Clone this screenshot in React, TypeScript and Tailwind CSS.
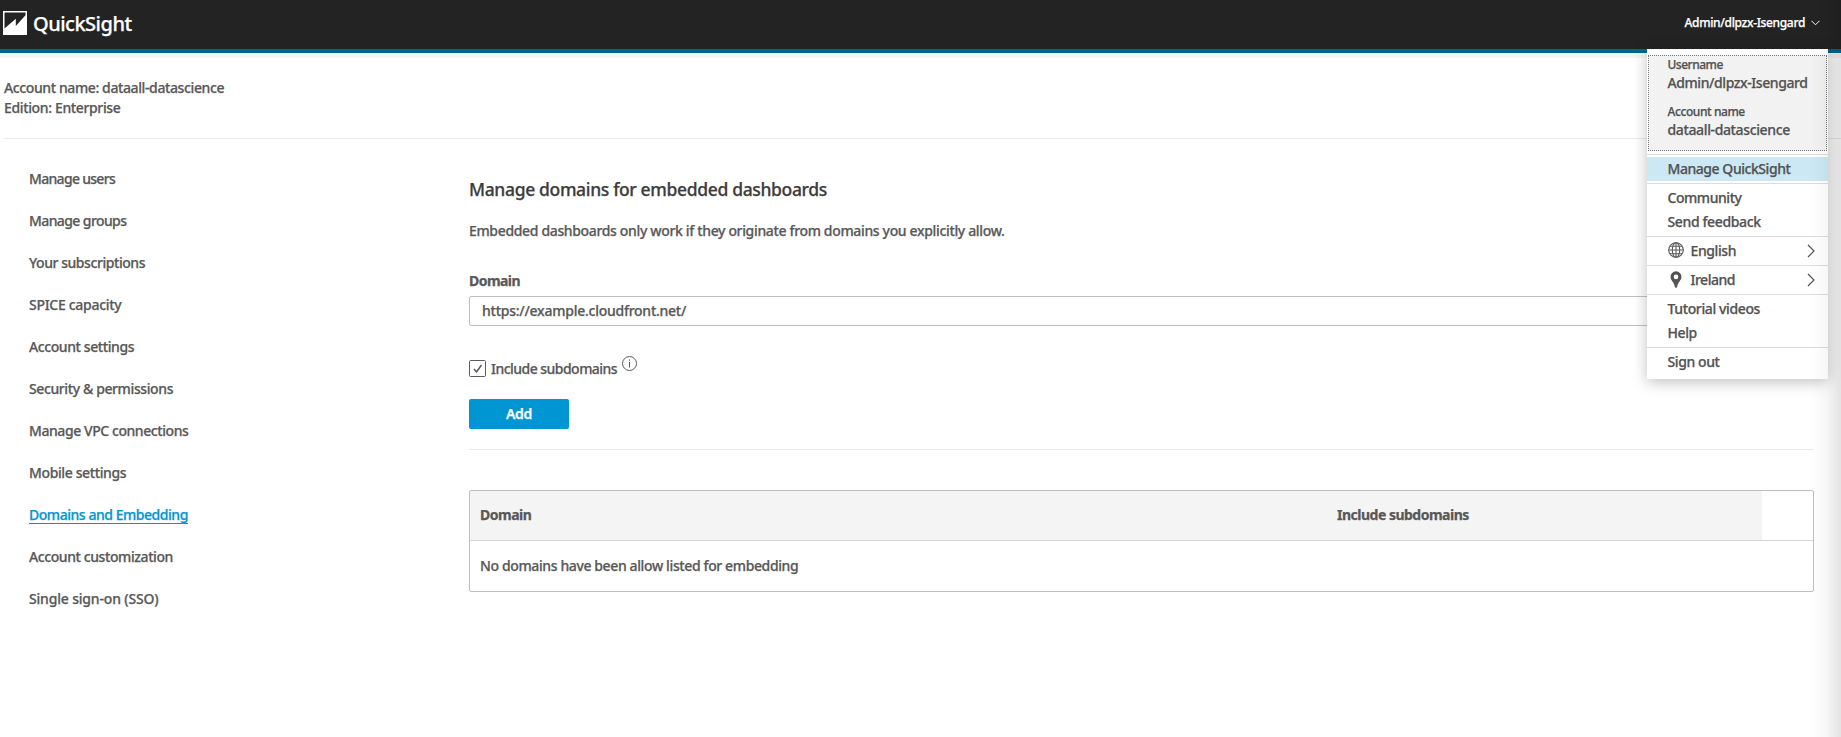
import type { ReactNode } from "react";

const NAV: { label: string; cls: string; active?: boolean }[] = [
  { label: "Manage users", cls: "tracking-[-0.69px]" },
  { label: "Manage groups", cls: "tracking-[-0.6px]" },
  { label: "Your subscriptions", cls: "tracking-[-0.44px]" },
  { label: "SPICE capacity", cls: "tracking-[-0.29px]" },
  { label: "Account settings", cls: "tracking-[-0.41px]" },
  { label: "Security & permissions", cls: "tracking-[-0.39px]" },
  { label: "Manage VPC connections", cls: "tracking-[-0.43px]" },
  { label: "Mobile settings", cls: "tracking-[-0.38px]" },
  { label: "Domains and Embedding", cls: "tracking-[-0.46px]", active: true },
  { label: "Account customization", cls: "tracking-[-0.41px]" },
  { label: "Single sign-on (SSO)", cls: "tracking-[-0.18px]" },
];

function Logo() {
  return (
    <svg width="24" height="24" viewBox="0 0 24 24" className="shrink-0">
      <rect width="24" height="24" fill="#fff" />
      <path d="M1.500 1.500h21v2.700L12.800 15V7.800L1.500 17.500z" fill="#232323" />
    </svg>
  );
}

function Globe() {
  return (
    <svg width="16" height="16" viewBox="0 0 16 16" fill="none" stroke="#5a5a5a" strokeWidth="1.1">
      <circle cx="8" cy="8" r="7.300" />
      <ellipse cx="8" cy="8" rx="3.700" ry="7.300" />
      <path d="M8 .7v14.600M.7 8h14.600M1.900 4.300h12.200M1.900 11.700h12.200" />
    </svg>
  );
}

function Pin() {
  return (
    <svg width="12" height="17" viewBox="0 0 12 17">
      <path
        fillRule="evenodd"
        d="M6 .3A5.500 5.500 0 0 0 .5 5.800C.5 9.500 4.200 11.300 4.800 15.700Q5 16.800 6 16.800T7.200 15.700C7.800 11.300 11.500 9.500 11.500 5.800A5.500 5.500 0 0 0 6 .3zM6 3.600a2.300 2.300 0 1 1 0 4.600 2.300 2.300 0 0 1 0-4.600z"
        fill="#545454"
      />
    </svg>
  );
}

function Group({ children, last }: { children: ReactNode; last?: boolean }) {
  return <div className={last ? "pt-[2px] pb-[5px]" : "border-b border-[#dcdcdc] py-[2px]"}>{children}</div>;
}

function Item({ label, cls, icon, active }: { label: string; cls: string; icon?: ReactNode; active?: boolean }) {
  return (
    <div className={`flex h-6 items-center pr-[13px] pl-[20.5px] leading-6 ${active ? "bg-[#cbe8f4]" : ""}`}>
      {icon && <span className="flex w-[23px] shrink-0 items-center pb-[2px]">{icon}</span>}
      <span className={cls}>{label}</span>
      {icon && (
        <svg width="8" height="14" viewBox="0 0 8 14" fill="none" stroke="#545454" strokeWidth="1.2" className="ml-auto">
          <path d="M1 1l6 6-6 6" />
        </svg>
      )}
    </div>
  );
}

function Menu() {
  return (
    <div className="absolute top-[49px] right-[13px] z-10 w-[181px] bg-white pt-[6px] text-[#525252] shadow-[0_3px_14px_rgba(0,0,0,0.25)]">
      <div className="mx-px h-24 border border-dotted border-[#777] bg-[#f2f2f2] pl-[18.5px]">
        <p className="mt-px text-xs leading-4 tracking-[-0.5px]">Username</p>
        <p className="leading-5 tracking-[-0.42px]">Admin/dlpzx-Isengard</p>
        <p className="mt-[11px] text-xs leading-4 tracking-[-0.42px]">Account name</p>
        <p className="leading-5 tracking-[-0.37px]">dataall-datascience</p>
      </div>
      <div className="mt-[3px] border-t border-[#dcdcdc]" />
      <Group>
        <Item label="Manage QuickSight" cls="tracking-[-0.45px]" active />
      </Group>
      <Group>
        <Item label="Community" cls="tracking-[-0.45px]" />
        <Item label="Send feedback" cls="tracking-[-0.37px]" />
      </Group>
      <Group>
        <Item label="English" cls="tracking-[-0.4px]" icon={<Globe />} />
      </Group>
      <Group>
        <Item label="Ireland" cls="tracking-[-0.5px]" icon={<span className="ml-0.5"><Pin /></span>} />
      </Group>
      <Group>
        <Item label="Tutorial videos" cls="tracking-[-0.38px]" />
        <Item label="Help" cls="tracking-[-0.4px]" />
      </Group>
      <Group last>
        <Item label="Sign out" cls="tracking-[-0.4px]" />
      </Group>
    </div>
  );
}

export default function App() {
  return (
    <div className="relative h-[737px] w-full overflow-hidden bg-white font-['Noto_Sans',sans-serif] text-sm font-medium text-[#585858] [-webkit-text-stroke:0.25px]">
      <header className="flex h-[53px] items-start justify-between border-b-4 border-[#00668f] bg-[#232323] pl-[3px] text-white">
        <div className="flex items-start gap-[6px] pt-[11px]">
          <Logo />
          <span className="text-[20px] leading-[26px] tracking-[-0.5px]">QuickSight</span>
        </div>
        <div className="flex items-center gap-[6px] pt-[13px] pr-[21px] text-xs leading-5">
          <span className="tracking-[-0.34px]">Admin/dlpzx-Isengard</span>
          <svg width="9" height="6" viewBox="0 0 9 6" fill="none" stroke="#fff" strokeWidth="1">
            <path d="M.5.8l4 4 4-4" />
          </svg>
        </div>
      </header>
      <div className="h-[5px] bg-[#f4f4f4]" />
      <section className="ml-1 border-b border-[#eaeaea] py-5 leading-5">
        <p className="tracking-[-0.39px]">Account name: dataall-datascience</p>
        <p className="tracking-[-0.36px]">Edition: Enterprise</p>
      </section>
      <div className="flex">
        <nav className="flex w-[469px] shrink-0 flex-col items-start pt-[19px] pl-[29px]">
          {NAV.map((n) => (
            <a
              key={n.label}
              className={`h-[42px] leading-[42px] ${n.cls} ${n.active ? "text-[#0095d3] underline decoration-1 underline-offset-[3px]" : ""}`}
            >
              {n.label}
            </a>
          ))}
        </nav>
        <main className="w-[1345px] pt-[38px]">
          <h1 className="text-[17.5px] leading-6 tracking-[-0.35px] text-[#3c3c3c]">Manage domains for embedded dashboards</h1>
          <p className="mt-5 leading-5 tracking-[-0.345px]">
            Embedded dashboards only work if they originate from domains you explicitly allow.
          </p>
          <p className="mt-[30px] leading-5 font-bold tracking-[-0.55px]">Domain</p>
          <div className="mt-[5px] flex h-[30px] items-center rounded-[2px] border border-[#bfbfbf] px-3">
            <span className="tracking-[-0.25px]">https://example.cloudfront.net/</span>
          </div>
          <div className="mt-[33px] flex h-5 items-center leading-5">
            <svg width="17" height="17" viewBox="0 0 17 17" fill="none" stroke="#5a5a5a" className="mb-px">
              <rect x=".5" y=".5" width="16" height="16" rx="1" />
              <path d="M5 9l2.500 3 5-7" strokeWidth="1.500" />
            </svg>
            <span className="ml-[5px] tracking-[-0.53px]">Include subdomains</span>
            <svg width="15" height="15" viewBox="0 0 15 15" fill="none" stroke="#5a5a5a" className="mb-[11px] ml-[5px]">
              <circle cx="7.500" cy="7.500" r="7" />
              <path d="M7.500 6v5.500M7.500 3.500v1.300" />
            </svg>
          </div>
          <button className="mt-5 block h-[30px] w-[100px] rounded-[2px] bg-[#0095d3] font-semibold tracking-[-0.3px] text-white">Add</button>
          <div className="mt-5 h-px bg-[#eaeaea]" />
          <div className="mt-10 rounded-[2px] border border-[#bfbfbf]">
            <div className="flex h-[50px] items-center border-b border-[#d6d6d6] font-bold">
              <div className="flex h-full w-[857px] items-center bg-[#f4f4f4] pb-0.5 pl-[10px]">
                <span className="tracking-[-0.5px]">Domain</span>
              </div>
              <div className="flex h-full w-[435px] items-center bg-[#f4f4f4] pb-0.5 pl-[10px]">
                <span className="tracking-[-0.5px]">Include subdomains</span>
              </div>
            </div>
            <div className="flex h-[50px] items-center pl-[10px]">
              <span className="tracking-[-0.38px]">No domains have been allow listed for embedding</span>
            </div>
          </div>
        </main>
      </div>
      <Menu />
      <div className="pointer-events-none absolute inset-y-0 right-0 z-20 w-[30px] bg-linear-to-r from-transparent via-black/3 to-black/11" />
    </div>
  );
}
